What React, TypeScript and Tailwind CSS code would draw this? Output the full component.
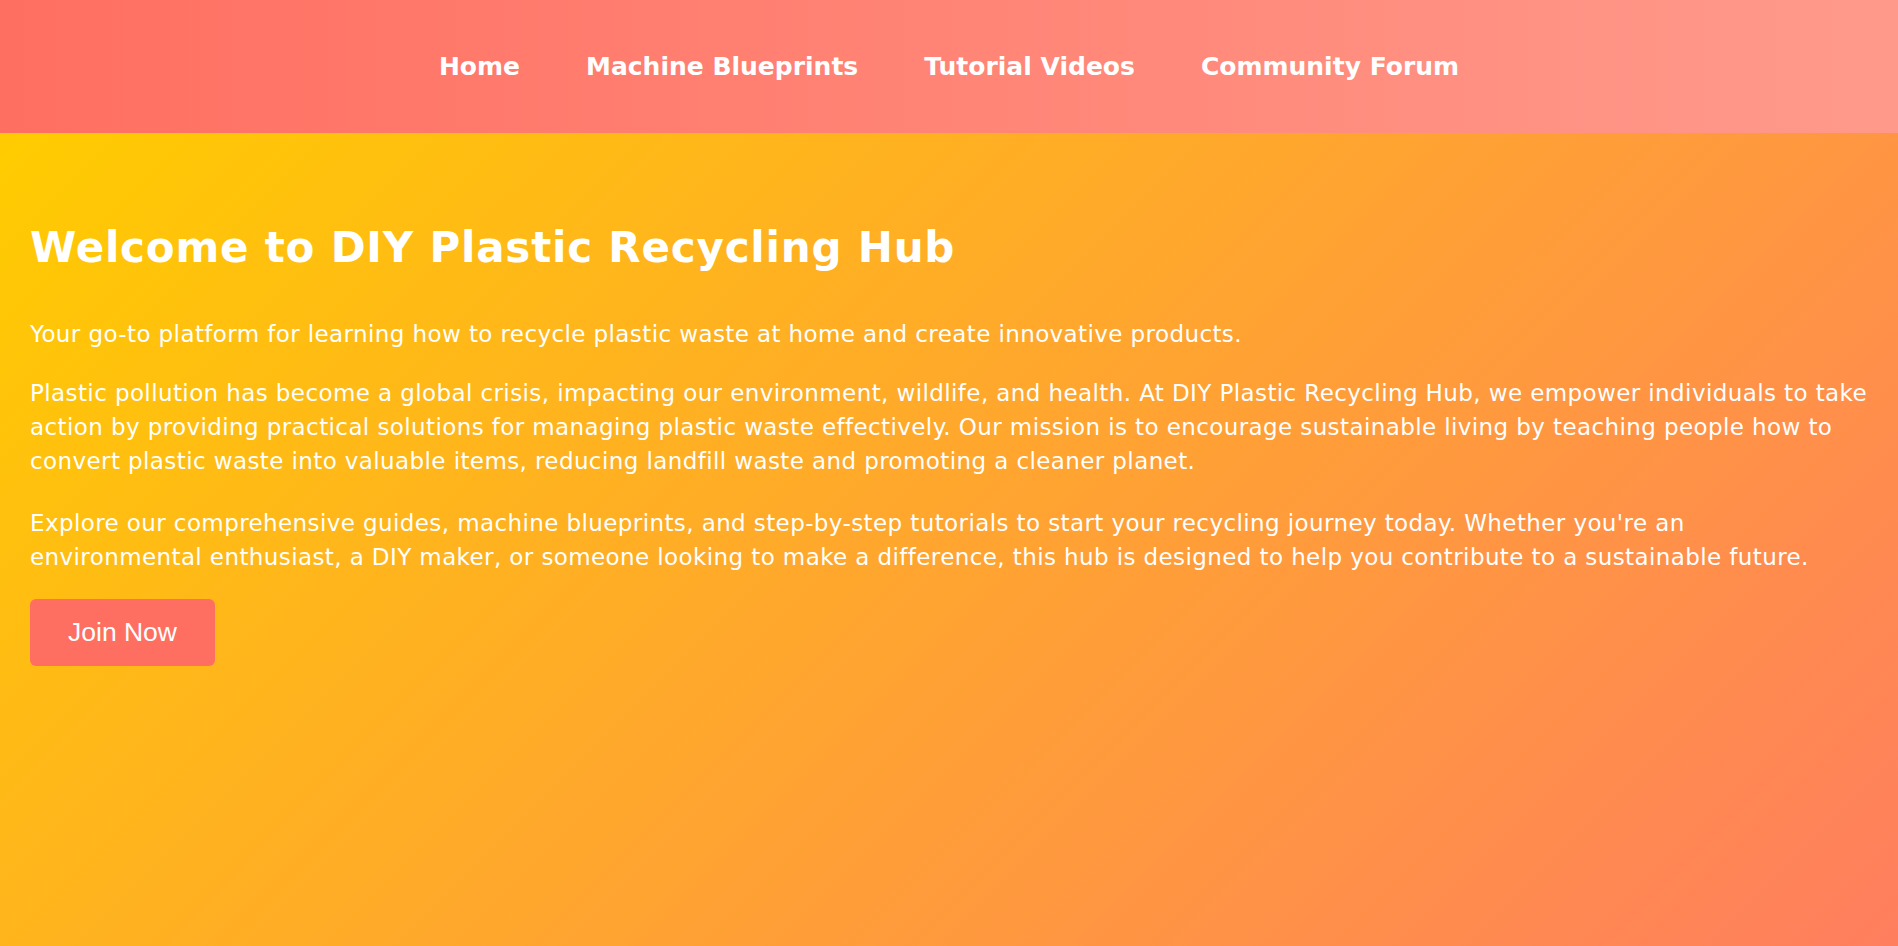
const links = ["Home", "Machine Blueprints", "Tutorial Videos", "Community Forum"]

export default function App() {
  return (
    <div className="min-h-screen flex flex-col font-['DejaVu_Sans',sans-serif] text-white">
      <header className="h-[133px] flex items-center justify-center gap-[66px] bg-[linear-gradient(to_right,#ff6f61,#ff9a8b)]">
        {links.map((link) => (
          <a key={link} href="#" className="text-[25px] font-bold text-white">
            {link}
          </a>
        ))}
      </header>

      <main className="flex-1 px-[30px] pt-[86px] bg-[linear-gradient(135deg,#ffcc00,#ff7e5f)]">
        <h1 className="text-[42px] leading-[58px] font-bold tracking-[0.8px] mb-[40px]">
          Welcome to DIY Plastic Recycling Hub
        </h1>
        <div className="text-[23px] leading-[34px] tracking-[0.4px] whitespace-nowrap">
          <p>Your go-to platform for learning how to recycle plastic waste at home and create innovative products.</p>
          <p className="mt-[25px]">
            Plastic pollution has become a global crisis, impacting our environment, wildlife, and health. At DIY
            Plastic Recycling Hub, we empower individuals to take
            <br />
            action by providing practical solutions for managing plastic waste effectively. Our mission is to encourage
            sustainable living by teaching people how to
            <br />
            convert plastic waste into valuable items, reducing landfill waste and promoting a cleaner planet.
          </p>
          <p className="mt-[28px]">
            Explore our comprehensive guides, machine blueprints, and step-by-step tutorials to start your recycling
            journey today. Whether you're an
            <br />
            environmental enthusiast, a DIY maker, or someone looking to make a difference, this hub is designed to help
            you contribute to a sustainable future.
          </p>
        </div>
        <button className="mt-[25px] px-[38px] py-[18px] rounded-md bg-[#ff6f61] text-white text-[26.5px] leading-[31px] font-['Liberation_Sans',Arial,sans-serif]">
          Join Now
        </button>
      </main>
    </div>
  )
}
